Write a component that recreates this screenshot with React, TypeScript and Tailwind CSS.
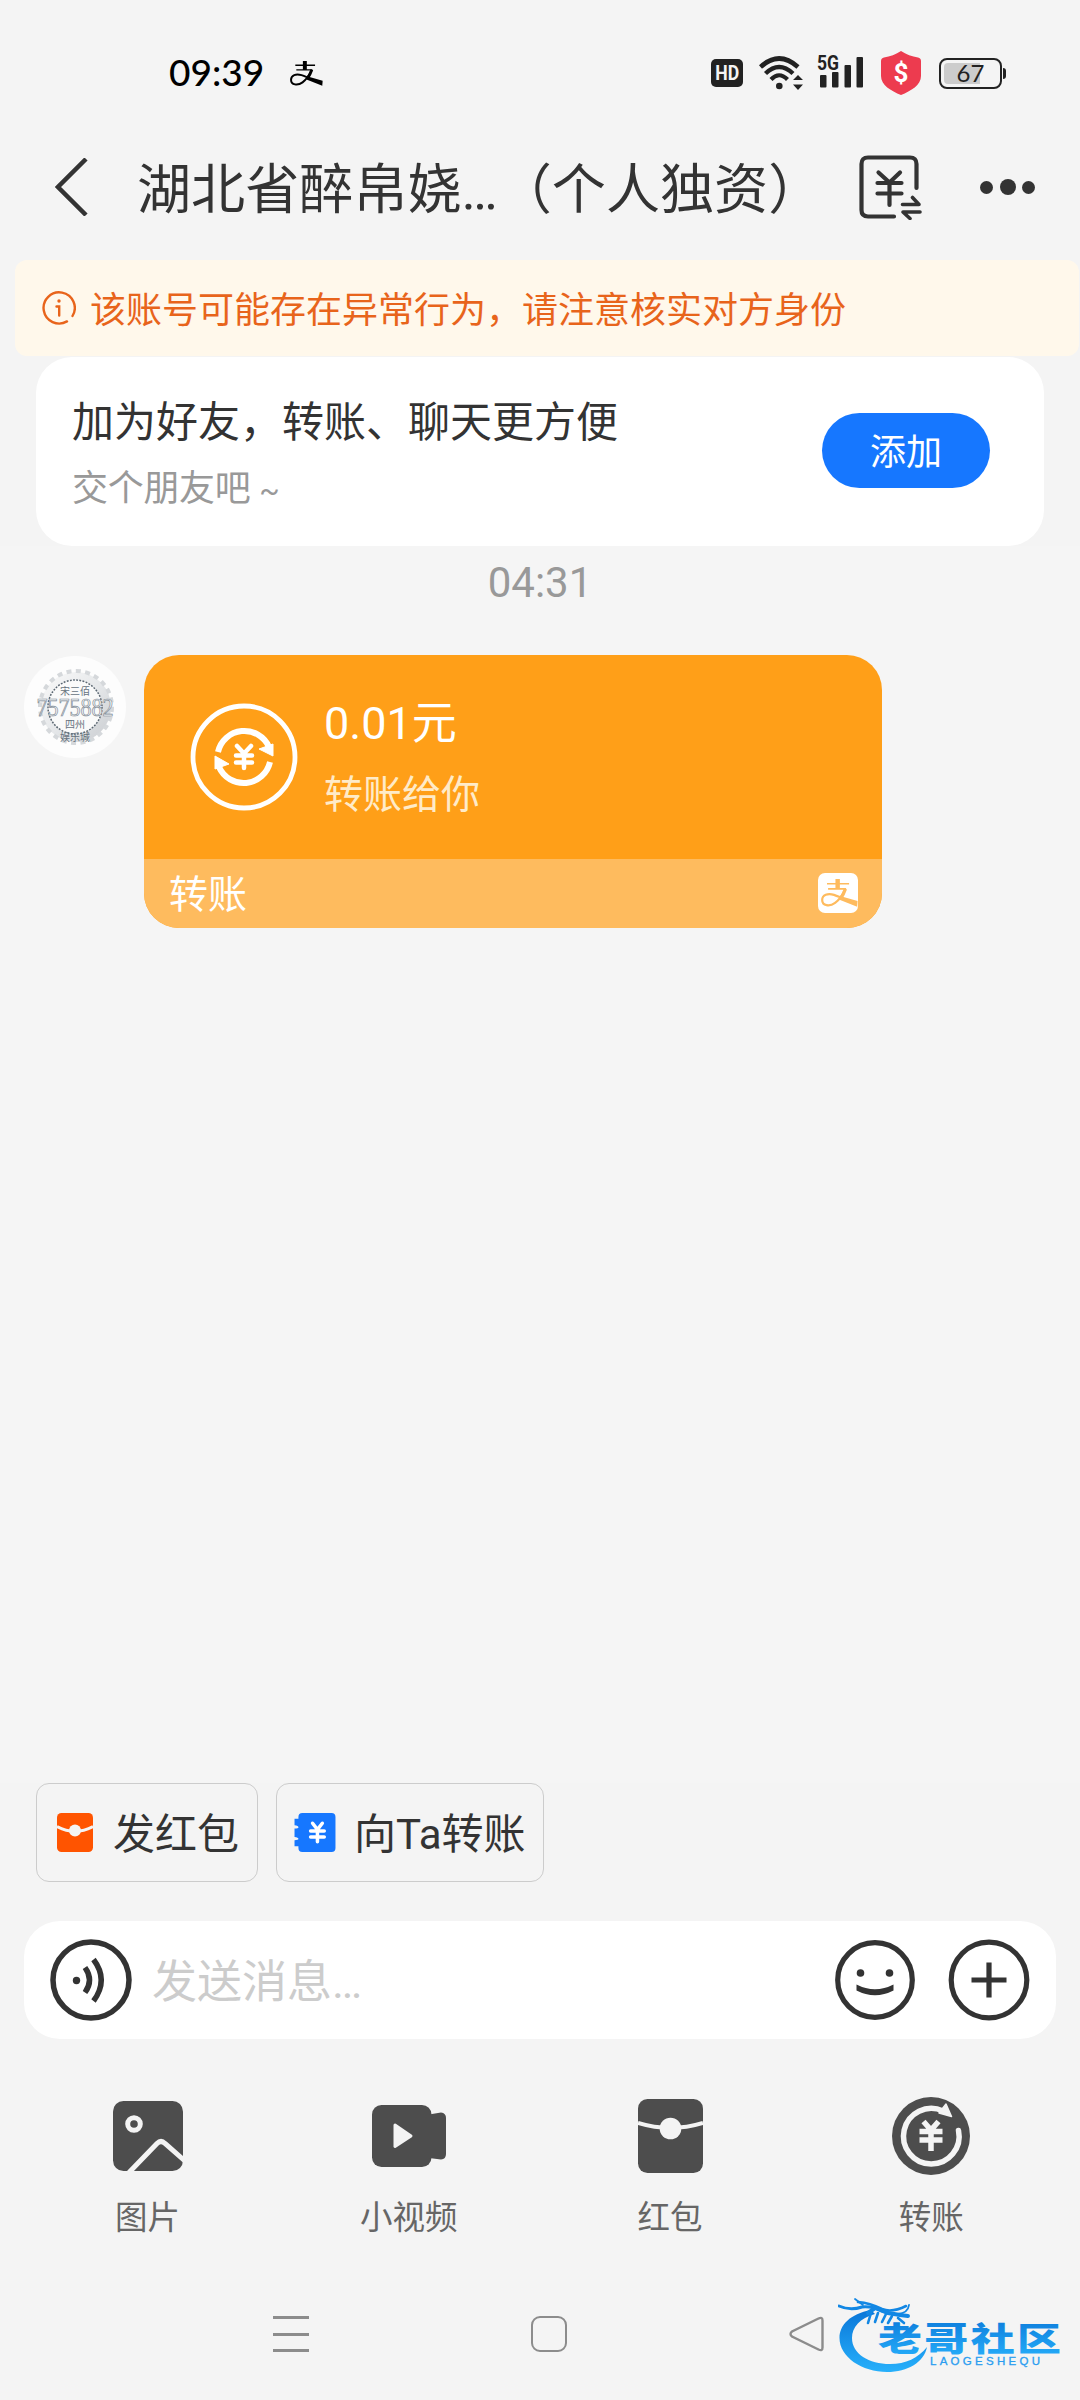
import type { ReactNode } from "react"

type Tool = {
  label: string
  icon: ReactNode
}

function AlipayMark({ className, color }: { className?: string; color: string }) {
  return (
    <svg viewBox="0 0 100 76" className={className} fill="none" stroke={color}>
      <path d="M16 13H76M19 27H68" strokeWidth="4.5" />
      <path d="M45 0V27" strokeWidth="12" />
      <path d="M66 27C58 44 50 56 38 65C23 76 3 73 3 57C3 43 18 38 35 43C44 46 50 49 60 53" strokeWidth="6" />
      <path d="M66 27C62 39 58 46 52 54" strokeWidth="9" />
      <path d="M54 47L99 60L98 75L50 56Z" fill={color} stroke="none" />
    </svg>
  )
}

function StatusBar() {
  return (
    <div className="flex h-[130px] items-center pt-4">
      <span className="mb-1 ml-[169px] w-[121px] font-['Lato'] text-[37px] leading-none font-medium text-black">
        09:39
      </span>
      <AlipayMark className="h-[25px] w-[33px]" color="#000" />

      <div className="ml-[388px] flex h-7 w-8 items-center justify-center rounded-[5px] bg-[#222] font-['Roboto'] text-[21px] leading-none font-bold text-[#f4f4f4]">
        <span className="scale-x-[0.84]">HD</span>
      </div>

      <svg viewBox="0 0 44 36" className="ml-4 h-9 w-11" fill="none" stroke="#222">
        <path d="M1.5 12Q20 -5 39 12" strokeWidth="4.6" />
        <path d="M6.5 18.500Q20 5.500 34 18.500" strokeWidth="4.400" />
        <path d="M12 24.500Q20 16 28.500 24.500" strokeWidth="4.200" />
        <circle cx="20.300" cy="31" r="3.300" fill="#222" stroke="none" />
        <path d="M34 25L39 20L44 25ZM34 29.500L39 35L44 29.500Z" fill="#222" stroke="none" />
      </svg>

      <svg viewBox="0 0 48 44" className="ml-3.5 h-11 w-12" fill="#222">
        <text x="0" y="19" fontFamily="Roboto" fontSize="20" fontWeight="700" textLength="22" lengthAdjust="spacingAndGlyphs">
          5G
        </text>
        <rect x="3" y="24" width="6.500" height="12.500" rx="1" />
        <rect x="15" y="21" width="6.500" height="15.500" rx="1" />
        <rect x="27.500" y="14" width="6.500" height="22.500" rx="1" />
        <rect x="39.500" y="6" width="6.500" height="30.500" rx="1" />
      </svg>

      <svg viewBox="0 0 40 44" className="ml-4 h-11 w-10">
        <path d="M20 0C25 3.500 31 5.500 37 6.500Q40 7 40 10V25C40 34 30 40 20 44C10 40 0 34 0 25V10Q0 7 3 6.500C9 5.500 15 3.500 20 0Z" fill="#ed3b4f" />
        <text x="20" y="31" textAnchor="middle" fontFamily="Roboto" fontSize="26" fontWeight="700" fill="#fff">
          $
        </text>
      </svg>

      <div className="ml-[18px] flex items-center gap-px">
        <div className="relative h-[31px] w-[63px] rounded-[8px] border-2 border-[#222] p-[3px]">
          <div className="h-full w-9 rounded-l-[4px] bg-[#ccc]" />
          <span className="absolute inset-0 flex items-center justify-center font-['Lato'] text-[24px] leading-none text-[#222]">
            67
          </span>
        </div>
        <div className="h-[11px] w-[3px] rounded-r bg-[#222]" />
      </div>
    </div>
  )
}

function Header() {
  return (
    <div className="mb-4 flex h-[114px] items-center text-[#333]">
      <svg viewBox="0 0 34 58" className="ml-[55px] h-[58px] w-[34px]" fill="none" stroke="#333" strokeWidth="4.500">
        <path d="M31 1L3 29L31 57" />
      </svg>
      <h1 className="ml-12 w-[722px] pt-[7px] text-[54.1px] leading-[70px] whitespace-nowrap">
        湖北省醉帛娆…（个人独资）
      </h1>

      <svg viewBox="0 0 64 65" className="h-[65px] w-16" fill="none" stroke="#333" strokeWidth="4.200" strokeLinecap="round" strokeLinejoin="round">
        <path d="M57.500 33V9Q57.500 2.500 51 2.500H9Q2.500 2.500 2.500 9V55Q2.500 61.500 9 61.500H35" />
        <path d="M19.500 17.500L30.500 27.500L41 17.500M18.500 28H42.500M18.500 38.500H42.500M30.500 28V50" />
        <path d="M43.500 49.500H60L53.500 42.500M61 57H44L51 63.500" strokeWidth="3.600" />
      </svg>

      <div className="ml-[57px] flex items-center gap-[6.5px]">
        <span className="h-[13px] w-[13px] rounded-full bg-[#333]" />
        <span className="h-4 w-4 rounded-full bg-[#333]" />
        <span className="h-[13px] w-[13px] rounded-full bg-[#333]" />
      </div>
    </div>
  )
}

function Notice() {
  return (
    <div className="mr-px ml-[15px] flex h-24 items-center rounded-[12px] bg-[#fff8eb] text-[#e8641b]">
      <svg viewBox="0 0 34 34" className="ml-[27px] h-[34px] w-[34px]" fill="none" stroke="#e8641b" strokeWidth="2.400" strokeLinecap="round">
        <path d="M30.500 25A15.600 15.600 0 1 0 25 30.400" />
        <path d="M14.500 15.500H17.200V24.500" />
        <circle cx="17" cy="10" r="1.700" fill="#e8641b" stroke="none" />
      </svg>
      <p className="ml-3.5 pt-1.5 text-[36px] leading-none">该账号可能存在异常行为，请注意核实对方身份</p>
    </div>
  )
}

function AddFriend() {
  return (
    <div className="mx-9 mt-px flex h-[189px] justify-between rounded-[36px] bg-white pr-[54px] pl-9">
      <div className="pt-[42px]">
        <p className="text-[42px] leading-[48px] text-[#333]">加为好友，转账、聊天更方便</p>
        <p className="mt-[18px] text-[36px] leading-[48px] tracking-[-0.3px] text-[#999]">
          交个朋友吧 <span className="text-[30px]">~</span>
        </p>
      </div>
      <button className="mt-14 h-[75px] w-[168px] rounded-full bg-[#1677ff] pt-[5px] text-[36px] leading-none text-white">
        添加
      </button>
    </div>
  )
}

function Avatar() {
  return (
    <svg viewBox="0 0 102 102" className="mt-px h-[102px] w-[102px]">
      <defs>
        <linearGradient id="metal" x1="0" y1="0" x2="1" y2="1">
          <stop offset="0" stopColor="#fafafa" />
          <stop offset="0.5" stopColor="#e6e8ea" />
          <stop offset="1" stopColor="#c9ccd0" />
        </linearGradient>
      </defs>
      <circle cx="51" cy="51" r="51" fill="#fdfdfd" />
      <circle cx="52" cy="51" r="35" fill="url(#metal)" />
      <circle cx="52" cy="51" r="36" fill="none" stroke="#d5d8db" strokeWidth="4" strokeDasharray="5 4.400" />
      <circle cx="51" cy="51" r="27" fill="#fafafa" stroke="#5b6772" strokeWidth="1.500" strokeDasharray="1.800 1.400" />
      <g textAnchor="middle" fontFamily="Noto Sans CJK SC" fill="#66727d">
        <text x="51" y="39" fontSize="10">宋三佰</text>
        <text x="51" y="72" fontSize="10">四州</text>
        <text x="51" y="84.500" fontSize="10">娱乐城</text>
      </g>
      <text x="51" y="60" textAnchor="middle" fontFamily="Liberation Serif" fontSize="25" textLength="77" lengthAdjust="spacingAndGlyphs" fill="#f1f3f4" stroke="#7e8994" strokeWidth="0.700">
        7575882
      </text>
    </svg>
  )
}

function TransferMessage() {
  return (
    <div className="flex px-6 text-white">
      <Avatar />
      <div className="ml-[18px] h-[273px] w-[738px] overflow-hidden rounded-[35px] bg-[#ff9f18]">
        <div className="flex h-[204px]">
          <svg viewBox="0 0 108 108" className="mt-12 ml-[46px] h-[108px] w-[108px]" fill="none" stroke="#fff">
            <circle cx="54" cy="54" r="51" strokeWidth="4.800" />
            <path d="M28 49A27 27 0 0 1 79 44" strokeWidth="6" />
            <path d="M80 59A27 27 0 0 1 29 64" strokeWidth="6" />
            <path d="M69 46L83 53V41ZM39 61L25 53V66Z" fill="#fff" strokeWidth="1" strokeLinejoin="round" />
            <path d="M47 43L54 50.500L61 43M46 52.500H62M46 59.500H62M54 51V65" strokeWidth="4.500" strokeLinecap="round" />
          </svg>
          <div className="ml-[26px] pt-[39px]">
            <p className="text-[45px] leading-[60px]">0.01元</p>
            <p className="mt-[11px] text-[39px] leading-[60px] text-[#ffebc8]">转账给你</p>
          </div>
        </div>
        <div className="flex h-[69px] items-center justify-between bg-[#febb5e] pr-6 pl-[25px]">
          <span className="pt-1 text-[39px] leading-none">转账</span>
          <div className="mb-0.5 flex h-10 w-10 items-center justify-end rounded-[7px] bg-white">
            <AlipayMark className="h-7 w-[37px]" color="#febb5e" />
          </div>
        </div>
      </div>
    </div>
  )
}

function QuickActions() {
  return (
    <div className="flex gap-[18px] px-9 text-[42px] leading-none text-[#333]">
      <button className="flex h-[99px] w-[222px] items-center rounded-[13px] border border-[#ccc] pl-5">
        <svg viewBox="0 0 36 39" className="h-[39px] w-9">
          <rect width="36" height="39" rx="4.500" fill="#ff5400" />
          <path d="M0 13.500Q18 23 36 13.500" fill="none" stroke="#f4f4f4" strokeWidth="3" />
          <circle cx="18" cy="17.500" r="6" fill="#f4f4f4" />
        </svg>
        <span className="ml-5 pt-1">发红包</span>
      </button>
      <button className="flex h-[99px] w-[268px] items-center rounded-[13px] border border-[#ccc] pl-[17px]">
        <svg viewBox="0 0 42 40" className="h-[39px] w-[42px]">
          <path d="M8 0H38Q42 0 42 4V36Q42 40 38 40H8Q4 40 4 36V34H0V28Q4 28 4 26.500Q4 25 0 24.500V16Q4 16 4 14.500Q4 13 0 12.500V6H4V4Q4 0 8 0Z" fill="#1677ff" />
          <path d="M18.500 10.500L23.500 17L28.500 10.500M16.500 18.500H30.500M16.500 24.500H30.500M23.500 18V29.500" fill="none" stroke="#fff" strokeWidth="3.600" strokeLinecap="round" />
        </svg>
        <span className="ml-[18px] pt-1">向Ta转账</span>
      </button>
    </div>
  )
}

function InputBar() {
  return (
    <div className="mx-6 flex h-[118px] items-center rounded-[36px] bg-white px-[26px]">
      <svg viewBox="0 0 82 82" className="h-[82px] w-[82px]" fill="none" stroke="#333" strokeWidth="5.500">
        <circle cx="41" cy="41" r="38" />
        <circle cx="26.500" cy="41.500" r="3.700" fill="#333" stroke="none" />
        <path d="M35 28.500Q44 41 35 53.500" />
        <path d="M43.500 20.500Q59 41 43.500 62" />
      </svg>
      <p className="ml-5 flex-1 pt-1 text-[45px] leading-none text-[#ccc]">发送消息…</p>
      <svg viewBox="0 0 80 80" className="h-20 w-20" fill="none" stroke="#333" strokeWidth="5.200">
        <circle cx="40" cy="40" r="37.300" />
        <circle cx="25.500" cy="33" r="3.800" fill="#333" stroke="none" />
        <circle cx="54.500" cy="33" r="3.800" fill="#333" stroke="none" />
        <path d="M21.500 44.500V50.500Q40 60 58.500 50.500V44.500Q40 54 21.500 44.500Z" fill="#333" stroke="none" />
      </svg>
      <svg viewBox="0 0 82 82" className="ml-[33px] h-[82px] w-[82px]" fill="none" stroke="#333" strokeWidth="5.200">
        <circle cx="41" cy="41" r="37.800" />
        <path d="M23.500 41H58.500M41 23.500V58.500" />
      </svg>
    </div>
  )
}

const tools: Tool[] = [
  {
    label: "图片",
    icon: (
      <svg viewBox="0 0 70 70" className="h-[70px] w-[70px]">
        <rect width="70" height="70" rx="10.500" fill="#4d4d4d" />
        <circle cx="21" cy="23" r="6.300" fill="none" stroke="#f4f4f4" strokeWidth="5" />
        <path d="M16 71.500L44 42.500Q48 38.500 52 42.500L72 60" fill="none" stroke="#f4f4f4" strokeWidth="5" />
      </svg>
    ),
  },
  {
    label: "小视频",
    icon: (
      <svg viewBox="0 0 74 62" className="h-[62px] w-[74px]">
        <rect width="59.500" height="62" rx="9.500" fill="#4d4d4d" />
        <path d="M57 9.500L69 7.500Q74 8 74 13V49Q74 54 69 54.500L57 53Z" fill="#4d4d4d" />
        <path d="M23 20L39 31L23 41.500Z" fill="#f4f4f4" stroke="#f4f4f4" strokeWidth="3" strokeLinejoin="round" />
      </svg>
    ),
  },
  {
    label: "红包",
    icon: (
      <svg viewBox="0 0 65 74" className="h-[74px] w-[65px]">
        <rect width="65" height="74" rx="9.500" fill="#4d4d4d" />
        <path d="M0 24Q32.500 34 65 24" fill="none" stroke="#f4f4f4" strokeWidth="4" />
        <circle cx="32.500" cy="29.500" r="10.800" fill="#f4f4f4" />
      </svg>
    ),
  },
  {
    label: "转账",
    icon: (
      <svg viewBox="0 0 78 78" className="h-[78px] w-[78px]" fill="none" stroke="#f4f4f4">
        <circle cx="39" cy="39" r="39" fill="#4d4d4d" stroke="none" />
        <path d="M66.500 33.500A27.800 27.800 0 1 1 51 14" strokeWidth="5.500" strokeLinecap="round" />
        <path d="M54 7L59.500 19.500L47 16Z" fill="#f4f4f4" strokeWidth="1.500" strokeLinejoin="round" />
        <path d="M31.500 24.500L39 33L46.500 24.500M27.500 34.500H50.500M27.500 43H50.500M39 33V54" strokeWidth="5.500" />
      </svg>
    ),
  },
]

function ToolBar() {
  return (
    <div className="grid grid-cols-4 pr-[18px] pl-[17px]">
      {tools.map((tool) => (
        <div key={tool.label} className="flex flex-col items-center">
          <div className="flex h-[78px] items-center">{tool.icon}</div>
          <span className="mt-[23px] text-[32.5px] leading-10 text-[#666]">{tool.label}</span>
        </div>
      ))}
    </div>
  )
}

function Watermark() {
  return (
    <svg viewBox="0 0 224 76" className="h-[76px] w-[224px]">
      <defs>
        <linearGradient id="blue" x1="0" y1="0" x2="0" y2="1">
          <stop offset="0" stopColor="#0a76d8" />
          <stop offset="1" stopColor="#27b0fb" />
        </linearGradient>
      </defs>
      {/* dragon ring */}
      <path d="M33 14C12 18 1.500 29 1.500 42C1.500 61 24 76 49 76C70 76 86 66 89 51C80 62 68 68 52 68C31 68 14 58 14 42C14 31 22 22 37 18Z" fill="url(#blue)" />
      {/* dragon head and horns */}
      <g fill="none" stroke="#1287e4" strokeLinecap="round">
        <path d="M1 10Q12 15 24 11Q34 10 44 15" strokeWidth="3" />
        <path d="M20 6Q32 7 44 13Q54 17 68 10" strokeWidth="2.600" />
        <path d="M17 3L25 9M71 9Q70 17 60 18" strokeWidth="1.800" />
        <path d="M30 17L37 12L50 17L62 19L70 20" strokeWidth="4" />
        <path d="M33 17L30 27M40 17L37 26M48 18L44 26M54 20L50 27M60 22L66 27" strokeWidth="2.600" />
      </g>
      <text
        transform="translate(40 55) scale(1 0.740)"
        fontFamily="Noto Sans CJK SC"
        fontSize="44"
        fontWeight="900"
        textLength="183"
        fill="url(#blue)"
      >
        老哥社区
      </text>
      <text x="92" y="69" fontFamily="Liberation Sans" fontSize="11.500" textLength="110" fill="#2a9df0" stroke="#2a9df0" strokeWidth="0.300">
        LAOGESHEQU
      </text>
    </svg>
  )
}

function SystemNav() {
  return (
    <div className="flex h-[132px] items-center">
      <div className="ml-[273px] flex w-9 flex-col gap-[13.5px]">
        <span className="h-[3px] bg-[#8c8c8c]" />
        <span className="h-[3px] bg-[#8c8c8c]" />
        <span className="h-[3px] bg-[#8c8c8c]" />
      </div>
      <div className="ml-[222px] h-9 w-9 rounded-[9px] border-[2.5px] border-[#8c8c8c]" />
      <svg viewBox="0 0 36 36" className="ml-[222px] h-9 w-9" fill="none" stroke="#8c8c8c" strokeWidth="2.400">
        <path d="M29.500 2.500Q33.500 0.500 33.500 4.500V31.500Q33.500 35.500 29.500 33.500L3 20.500Q0 18 3 15.500Z" />
      </svg>
      <div className="ml-[13px]">
        <Watermark />
      </div>
    </div>
  )
}

export default function App() {
  return (
    <div className="flex h-[2400px] w-[1080px] flex-col overflow-hidden bg-[#f4f4f4] font-['Roboto','Noto_Sans_CJK_SC',sans-serif]">
      <StatusBar />
      <Header />
      <Notice />
      <AddFriend />
      <div className="flex flex-1 flex-col bg-[#f5f5f5]">
        <p className="h-[109px] pt-[11px] text-center text-[42px] leading-[52px] text-[#999]">04:31</p>
        <TransferMessage />
      </div>
      <QuickActions />
      <div className="mt-[39px]">
        <InputBar />
      </div>
      <div className="mt-[58px]">
        <ToolBar />
      </div>
      <div className="mt-[30px]">
        <SystemNav />
      </div>
    </div>
  )
}
